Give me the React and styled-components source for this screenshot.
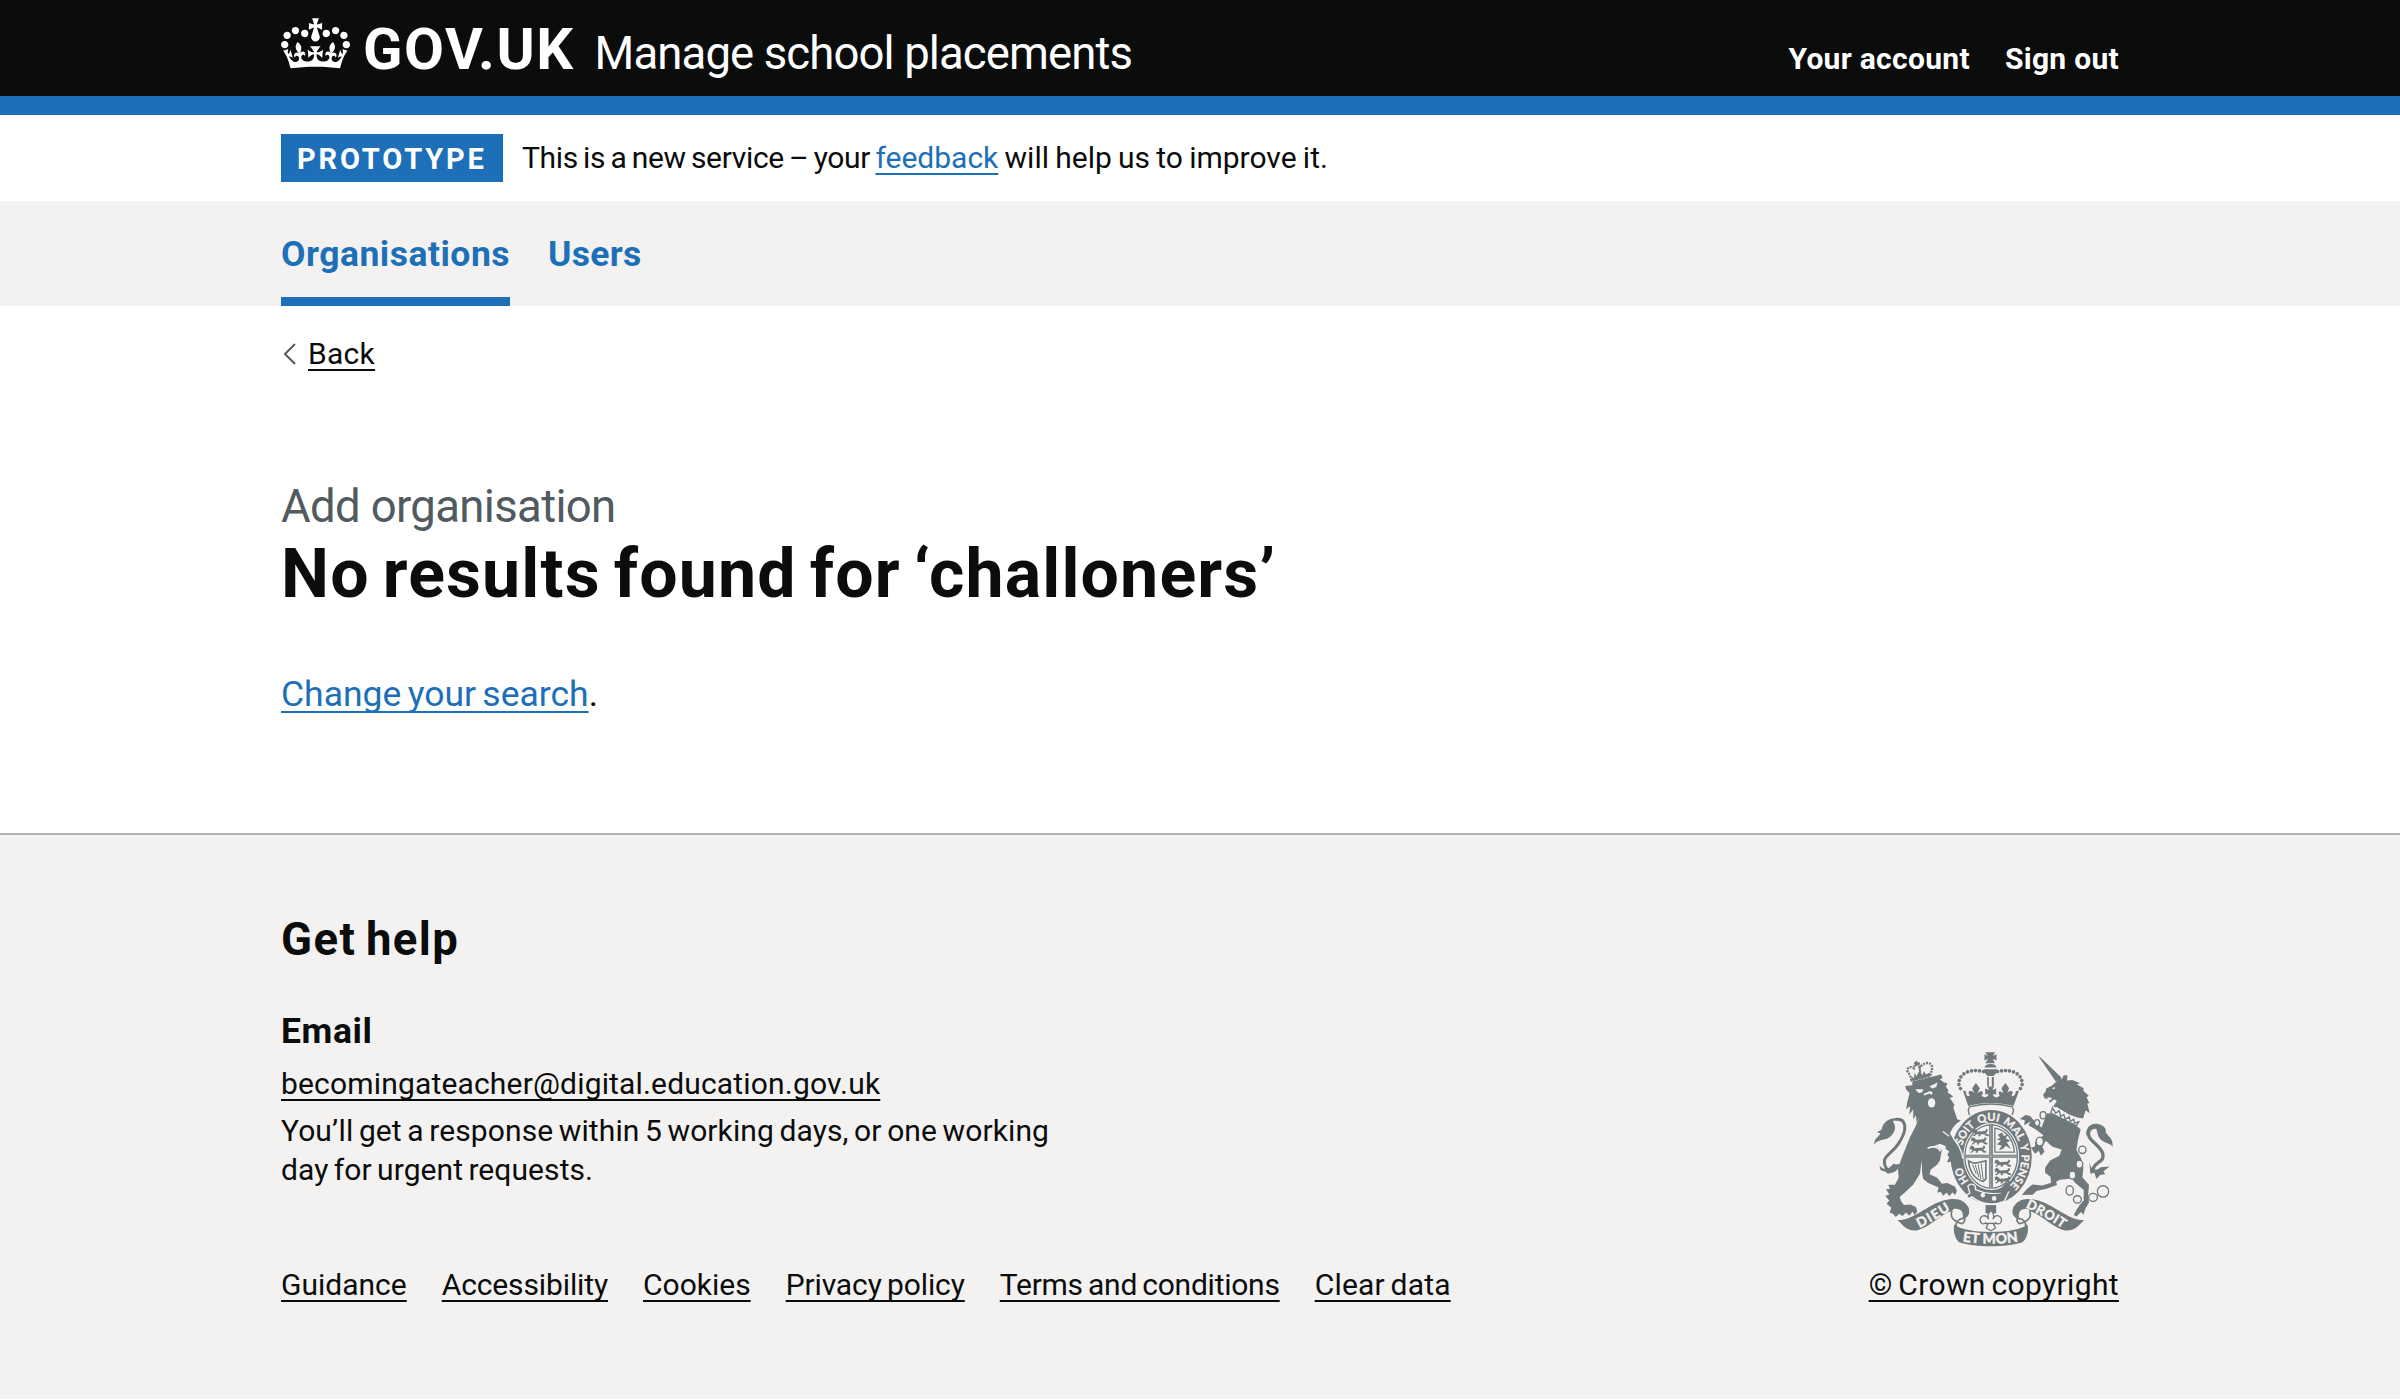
import React from "react";
import styled, { createGlobalStyle } from "styled-components";

const ink = "#0b0c0c";
const blue = "#1d70b8";
const grey = "#f3f2f1";

const GlobalStyle = createGlobalStyle`
  * { box-sizing: border-box; }
  body {
    margin: 0;
    background: #fff;
    color: ${ink};
    font-family: Roboto, "Liberation Sans", sans-serif;
    font-size: 30px;
    line-height: 38px;
  }
  h1, h2, h3, p, ul { margin: 0; padding: 0; }
  ul { list-style: none; }
`;

const Container = styled.div`
  width: 1838px;
  margin: 0 auto;
`;

const Header = styled.header`
  height: 115px;
  background: ${ink};
  border-bottom: 19px solid ${blue};
  color: #fff;
`;

const HeaderRow = styled(Container)`
  display: flex;
  align-items: baseline;
  padding-top: 18px;
  white-space: nowrap;
`;

const Crown = styled.svg`
  width: 69px;
  height: 51px;
  margin: 0 13px -4px 0;
  flex: none;
`;

const LogoText = styled.span`
  font-size: 58px;
  font-weight: 700;
  line-height: 60px;
  letter-spacing: 1.5px;
`;

const ServiceName = styled.span`
  margin-left: 20px;
  font-size: 45.5px;
  line-height: 50px;
  letter-spacing: -0.88px;
`;

const AccountNav = styled.nav`
  display: flex;
  gap: 35px;
  margin-left: auto;
`;

const AccountLink = styled.a`
  font-weight: 700;
  letter-spacing: 0.3px;
`;

const PhaseBanner = styled(Container)`
  display: flex;
  align-items: center;
  height: 86px;
  white-space: nowrap;
`;

const Tag = styled.strong`
  width: 222px;
  height: 48px;
  margin-right: 19px;
  padding-left: 16px;
  background: ${blue};
  color: #fff;
  font-size: 29px;
  line-height: 50px;
  letter-spacing: 2.85px;
`;

const Tracked = styled.span`
  letter-spacing: ${(p) => p.$track || 0}px;
  word-spacing: ${(p) => p.$word || 0}px;
`;

const Link = styled.a`
  color: ${(p) => (p.$blue ? blue : ink)};
  letter-spacing: ${(p) => p.$track || 0}px;
  word-spacing: ${(p) => p.$word || 0}px;
  text-decoration: underline;
  text-decoration-thickness: 2px;
  text-decoration-skip-ink: none;
  text-underline-offset: 5px;
`;

const PrimaryNav = styled.nav`
  background: ${grey};
`;

const NavRow = styled(Container)`
  display: flex;
  gap: 38px;
`;

const NavItem = styled.a`
  height: 105px;
  color: ${blue};
  font-size: 35.5px;
  font-weight: 700;
  line-height: 106px;
  letter-spacing: ${(p) => p.$track || 0}px;
  box-shadow: ${(p) => (p.$current ? `inset 0 -9px 0 ${blue}` : "none")};
`;

const Main = styled(Container).attrs({ as: "main" })`
  height: 527px;
  padding-top: 29px;
`;

const BackRow = styled.div`
  display: flex;
  align-items: center;
`;

const Chevron = styled.svg`
  width: 15px;
  height: 22px;
  margin-right: 12px;
`;

const Caption = styled.span`
  display: block;
  margin-top: 105px;
  color: #505a5f;
  font-size: 45.5px;
  line-height: 57px;
  letter-spacing: -0.65px;
`;

const Title = styled.h1`
  font-size: 68px;
  line-height: 78px;
  letter-spacing: 1.15px;
  word-spacing: -5px;
`;

const Action = styled.p`
  margin-top: 57px;
  font-size: 35.5px;
  line-height: 48px;
`;

const Footer = styled.footer`
  height: 566px;
  background: ${grey};
  border-top: 2px solid #b1b4b6;
`;

const FooterRow = styled(Container)`
  display: flex;
  align-items: flex-end;
  justify-content: space-between;
  padding-top: 77px;
`;

const HelpTitle = styled.h2`
  font-size: 45.5px;
  line-height: 56px;
  letter-spacing: 1.4px;
  word-spacing: -3px;
`;

const HelpSubtitle = styled.h3`
  margin: 39px 0 10px;
  font-size: 35.5px;
  line-height: 48px;
  letter-spacing: 0.6px;
`;

const HelpText = styled.p`
  margin: 9px 0 77px;
  line-height: 38.5px;
  white-space: nowrap;
`;

const FooterLinks = styled.ul`
  display: flex;
  gap: 35px;
  white-space: nowrap;
`;

const Copyright = styled.div`
  display: flex;
  flex-direction: column;
  align-items: center;
  gap: 19px;
  white-space: nowrap;
`;

const Arms = styled.svg`
  width: 239px;
  height: 196px;
`;

const footerLinks = [
  { label: "Guidance" },
  { label: "Accessibility", track: -0.12 },
  { label: "Cookies" },
  { label: "Privacy policy", track: -0.12, word: -2 },
  { label: "Terms and conditions", track: -0.25, word: -2 },
  { label: "Clear data", track: 0.2, word: -2 },
];

function CrownLogo() {
  return (
    <Crown viewBox="0 0 132 97" aria-hidden="true">
      <path
        fill="currentColor"
        fillRule="evenodd"
        d="M25 30.2c3.5 1.5 7.7-.2 9.1-3.7 1.5-3.6-.2-7.8-3.9-9.2-3.6-1.4-7.6.3-9.1 3.9-1.4 3.5.3 7.5 3.9 9zM9 39.5c3.6 1.5 7.8-.2 9.2-3.7 1.5-3.6-.2-7.8-3.9-9.1-3.6-1.5-7.6.2-9.1 3.8-1.4 3.5.3 7.5 3.8 9zM4.4 57.2c3.5 1.5 7.7-.2 9.1-3.8 1.5-3.6-.2-7.7-3.9-9.1-3.5-1.5-7.6.3-9.1 3.8-1.4 3.5.3 7.6 3.9 9.1zm38.3-21.4c3.5 1.5 7.7-.2 9.1-3.8 1.5-3.6-.2-7.7-3.9-9.1-3.6-1.5-7.6.3-9.1 3.8-1.3 3.6.4 7.7 3.9 9.1zm64.4-5.6c-3.6 1.5-7.8-.2-9.1-3.7-1.5-3.6.2-7.8 3.8-9.2 3.6-1.4 7.7.3 9.2 3.9 1.3 3.5-.4 7.5-3.9 9zm15.9 9.3c-3.6 1.5-7.7-.2-9.1-3.7-1.5-3.6.2-7.8 3.7-9.1 3.6-1.5 7.7.2 9.2 3.8 1.5 3.5-.3 7.5-3.8 9zm4.7 17.7c-3.6 1.5-7.8-.2-9.2-3.8-1.5-3.6.2-7.7 3.9-9.1 3.6-1.5 7.7.3 9.2 3.8 1.3 3.5-.4 7.6-3.9 9.1zM89.3 35.8c-3.6 1.5-7.8-.2-9.2-3.8-1.4-3.6.2-7.7 3.9-9.1 3.6-1.5 7.7.3 9.2 3.8 1.4 3.6-.3 7.7-3.9 9.1zM69.7 17.7l8.9 4.7V9.3l-8.9 2.8c-.2-.3-.5-.6-.9-.9L72.4 0H59.6l3.5 11.2c-.3.3-.6.5-.9.9l-8.8-2.8v13.1l8.8-4.7c.3.3.6.7.9.9l-5 15.4v.1c-.2.8-.4 1.6-.4 2.4 0 4.1 3.1 7.5 7 8.1h.2c.3 0 .7.1 1 .1.4 0 .7 0 1-.1h.2c4-.6 7.1-4.1 7.1-8.1 0-.8-.1-1.7-.4-2.4V34l-5.1-15.4c.4-.2.7-.6 1-.9zM66 92.8c16.9 0 32.8 1.1 47.1 3.2 4-16.9 8.9-26.7 14-33.5l-9.6-3.4c1 4.9 1.1 7.2 0 10.2-1.5-1.4-3-4.3-4.2-8.7L108.6 76c2.8-2 5-3.2 7.5-3.3-4.4 9.4-10 11.9-13.6 11.2-4.3-.8-6.3-4.6-5.6-7.9 1-4.7 5.7-5.9 8-.5 4.3-8.7-3-11.4-7.6-8.8 7.1-7.2 7.9-13.5 2.1-21.1-8 6.1-8.1 12.3-4.5 20.8-4.7-5.4-12.1-2.5-9.5 6.2 3.4-5.2 7.9-2 7.2 3.1-.6 4.3-6.4 7.8-13.5 7.2-10.3-.9-10.9-8-11.2-13.8 2.5-.5 7.1 1.8 11 7.3L80.2 60c-4.1 4.4-8 5.3-12.3 5.4 1.4-4.4 8-11.6 8-11.6H55.5s6.4 7.2 7.9 11.6c-4.2-.1-8-1-12.3-5.4l1.4 16.4c3.9-5.5 8.5-7.7 10.9-7.3-.3 5.8-.9 12.8-11.1 13.8-7.2.6-12.9-2.9-13.5-7.2-.7-5 3.8-8.3 7.1-3.1 2.7-8.7-4.6-11.6-9.4-6.2 3.7-8.5 3.6-14.7-4.6-20.8-5.8 7.6-5 13.9 2.2 21.1-4.7-2.6-11.9.1-7.7 8.8 2.3-5.5 7.1-4.2 8.1.5.7 3.3-1.3 7.1-5.7 7.9-3.5.7-9-1.8-13.5-11.2 2.5.1 4.7 1.3 7.5 3.3l-4.7-15.4c-1.2 4.4-2.7 7.2-4.3 8.7-1.1-3-.9-5.3 0-10.2l-9.5 3.4c5 6.9 9.9 16.7 14 33.5 14.8-2.1 30.8-3.2 47.7-3.2z"
      />
    </Crown>
  );
}

const steel = "#6f787b";

// Passant lion used in the first and fourth quarters of the shield.
function Passant({ x, y }) {
  return (
    <path
      transform={`translate(${x} ${y})`}
      d="M2 6 L8 1 L14 4 L18 9 L34 8 C42 8 46 4 42 0 L49 4 C50 10 44 13 42 14 L52 19 L52 23 L43 22 L38 17 L28 17 L26 23 L20 23 L22 18 L15 17 L9 23 L3 22 L10 17 L9 12 L1 14 L4 10Z"
    />
  );
}

const motto = [
  ["HO", 78, 48],
  ["SOIT", 190, 72],
  ["QUI", 274, 62],
  ["MAL", 348, 74],
  ["Y", 433, 20],
  ["PENSE", 462, 102],
];

const pearls = [
  [371, 93], [359, 91], [347, 90], [335, 91], [323, 94],
  [312, 100], [303, 109], [298, 120], [297, 132], [302, 144],
];

function RoyalArms() {
  return (
    <Arms viewBox="42 32 718 587" fill={steel} aria-hidden="true">
      {/* crown */}
      <path d="M376 35 L406 35 L399 46 L410 41 V60 L399 54 L405 68 H377 L385 54 L374 60 V41 L385 46Z M374 81 C376 72 385 70 392 70 C399 70 409 72 410 81Z M372 86 H412 V94 L401 106 H383 L372 94Z M382 109 h5 v29 h-5z M396 109 h6 v29 h-6z" />
      {pearls.map(([x, y]) => (
        <g key={x}>
          <circle cx={x} cy={y} r="5.5" />
          <circle cx={784 - x} cy={y} r="5.5" />
        </g>
      ))}
      <path d="M309 150 L318 152 C319 167 325 170 330 164 C320 151 332 146 343 157 L337 143 L348 127 L360 143 L353 158 C365 146 374 153 365 165 C373 174 384 170 386 160 L376 162 V144 L388 148 L383 138 H403 L397 148 L409 144 V162 L399 160 C401 171 412 174 420 165 C412 154 419 147 431 158 L425 143 L437 127 L448 143 L442 157 C451 147 465 150 455 164 C460 170 467 165 468 152 L478 150 L461 196 C416 184 369 184 325 196Z" />
      <path d="M329 199 C370 188 416 188 457 199 C466 210 459 220 453 227 C416 207 369 207 332 227 C324 217 323 208 329 199Z" fill={grey} stroke={steel} strokeWidth="4" />

      {/* garter and shield */}
      <ellipse cx="394" cy="349" rx="126" ry="146" fill={grey} />
      <ellipse cx="394" cy="349" rx="122" ry="141" />
      <ellipse cx="394" cy="348" rx="84" ry="101" fill={grey} />
      <ellipse cx="394" cy="348" rx="79" ry="95" fill="none" stroke={steel} strokeWidth="4" />
      <path d="M388 250 H399 V441 H388Z M315 343 H474 V352 H315Z" />
      <path d="M393 250 V441 M315 347 H474" stroke={grey} strokeWidth="1.5" />
      <Passant x="335" y="264" />
      <Passant x="331" y="289" />
      <Passant x="327" y="314" />
      <Passant x="402" y="356" />
      <Passant x="402" y="381" />
      <Passant x="402" y="406" />
      <path d="M405 263 C439 269 459 292 464 335 H405Z" fill="none" stroke={steel} strokeWidth="4" />
      <path d="M414 283 L427 276 L432 287 L445 280 L438 294 L452 300 L441 306 L454 326 L438 316 L430 325 L417 329 L426 315 L411 312 L424 300 L411 298 L421 292Z" />
      <g fill="none" stroke={steel} strokeWidth="3">
        <path d="M326 361 C344 374 356 365 378 361 V415 L370 423 C344 417 328 391 326 361Z" strokeWidth="5" />
        <path d="M338 372 L349 400 M346 373 L357 410 M355 372 L363 416 M364 369 L370 418" />
      </g>
      <path id="garter-path" d="M394 457 A91 108 0 0 1 394 241 A91 108 0 0 1 394 457" fill="none" />
      <path d="M324 437 C334 424 351 435 346 447 C379 463 410 463 446 455 L434 482 C406 495 365 494 337 469 C319 482 316 462 330 458 Z" stroke={grey} strokeWidth="4" />
      <path d="M411 452 C428 443 433 432 441 424 L452 440 L440 462Z" />
      <path d="M430 478 C405 492 365 490 340 467 L352 452 C380 465 412 465 445 452Z" />
      <circle cx="369" cy="464" r="7" fill={grey} />
      <circle cx="403" cy="474" r="7" fill={grey} />
      <g fill={grey} stroke={grey} strokeWidth="1" fontFamily="Lato, sans-serif" fontSize="33" fontWeight="700">
        {motto.map(([word, start, length]) => (
          <text key={word}>
            <textPath href="#garter-path" startOffset={start} textLength={length} lengthAdjust="spacingAndGlyphs">
              {word}
            </textPath>
          </text>
        ))}
      </g>

      {/* lion */}
      <path d="M157 123 L244 102 L248 112 L240 116 L252 126 L263 128 L258 138 L266 150 L262 154 L280 168 L270 172 L284 193 L280 200 L292 236 L303 240 L289 250 L279 262 L270 278 L281 297 L294 316 L302 335 L307 350 L303 372 L294 362 L286 368 L277 374 L273 364 L261 365 L268 350 L262 343 L268 333 L257 325 L258 317 L240 310 L218 318 L206 322 L232 318 L246 330 L243 343 L240 360 L232 372 L212 388 L209 401 L232 412 L246 430 L262 428 L285 438 L291 451 L286 464 L278 456 L268 467 L260 457 L249 466 L243 455 L232 456 L236 441 L205 428 L190 416 L187 402 L185 360 L180 400 L160 432 L133 458 L119 470 L123 482 L132 494 L152 492 L168 500 L172 514 L164 524 L158 514 L148 526 L138 516 L128 527 L118 520 L107 530 L99 520 L89 516 L94 502 L80 490 L88 480 L76 467 L88 462 L78 446 L90 446 L85 433 L105 433 L116 412 L114 384 L126 350 L150 290 L165 262 L172 245 L180 228 L170 247 L168 224 L160 236 L160 207 L148 222 L151 196 L139 206 L141 188 L149 158 L138 146 L136 136 L157 134Z" />
      <path d="M166 146 L191 146 L186 156 L176 157Z M209 137 L233 126 L229 139 L217 144Z M190 160 L210 151 L218 155 L216 163 L208 159 L194 165Z" fill={grey} />
      <ellipse cx="215" cy="187" rx="11" ry="14" fill={grey} />
      <path d="M203 323 C222 316 236 321 242 333" fill="none" stroke={grey} strokeWidth="5" />
      <path d="M249 273 L268 287 M280 292 L297 317 L305 336 L309 354" fill="none" stroke={grey} strokeWidth="4" />
      <path d="M155 119 L150 104 L142 91 C141 80 153 76 162 83 L166 69 L174 68 L180 80 C190 68 206 62 214 73 C220 82 214 92 211 106 Z" fill="none" stroke={steel} strokeWidth="7" strokeDasharray="6 3" />
      <path d="M154 108 L162 112 L164 97 L170 107 L178 91 L188 104 L192 91 L198 102 L210 96 L211 107 L157 121Z M165 65 L169 59 L172 66 L180 66 L179 73 L168 76 L163 70Z M175 78 L181 79 L184 96 L178 96Z" />
      <path d="M84 392 C54 347 92 346 115 310 C145 266 139 234 108 236" fill="none" stroke={steel} strokeWidth="9" />
      <path d="M137 242 C124 229 100 230 84 239 C72 245 66 258 65 268 L50 275 L61 278 C57 290 43 291 42 313 C54 293 74 303 92 287 C107 274 110 256 98 242 C112 239 126 236 137 242Z M58 374 C70 391 86 388 101 369 C108 375 115 370 125 369 C110 379 119 388 101 395 L84 400 L75 393 L62 389Z" />

      {/* unicorn */}
      <path d="M536 47 L543 51 L605 111 L588 123Z M590 123 L603 109 L606 117 L612 104 L623 104 L622 120 L638 118 L661 128 L651 131 L672 143 L671 151 L687 165 L681 171 L689 188 L683 189 L690 218 L678 209 L670 234 L653 231 L628 222 L592 200 L580 199 L591 181 L583 176 L570 187 L568 180 L573 177 L554 173 L550 162 L557 154 L560 143 L575 136Z" />
      <path d="M576 143 L586 139 L584 146Z M561 171 L573 171 L577 175 L570 178Z" fill={grey} />
      <path d="M562 218 L572 219 L650 256 L663 266 L655 298 L650 328 L664 353 L671 381 L668 410 L688 434 L685 466 L688 486 L678 503 L671 523 L664 515 L650 528 L642 524 L650 509 L661 492 L672 480 L672 449 L645 426 L637 414 L600 418 L589 424 L592 434 L560 445 L530 452 L519 463 L486 464 L502 445 L518 432 L548 435 L574 427 L572 409 L556 397 L556 382 L571 360 L599 346 L606 327 L578 319 L558 301 L548 319 L554 333 L544 346 L537 331 L526 340 L514 322 L526 317 L526 306 L551 284 L528 267 L506 254 L513 243 L493 254 L495 239 L480 235 L497 223 L511 226 L525 244 L545 261Z" />
      <path d="M578 202 L573 218 L650 256 L657 244 L644 248 L642 236 L632 243 L628 229 L617 237 L612 222 L603 228 L598 210 L588 218Z" fill={grey} stroke={steel} strokeWidth="4" />
      <path d="M698 392 C705 357 736 371 729 338 C720 312 676 296 688 270 C695 252 716 259 731 267" fill="none" stroke={steel} strokeWidth="10" />
      <path d="M680 286 C677 264 691 248 710 250 C727 251 742 263 738 275 C746 289 760 291 759 318 C746 303 729 310 716 287 L710 265 C700 262 688 271 680 286Z M689 365 C693 386 707 395 723 380 L750 378 L731 392 L737 401 L722 403 L710 416 L704 397 L692 400Z" />
      <g fill={grey} stroke={steel} strokeWidth="4">
        <ellipse cx="550" cy="224" rx="9" ry="11" />
        <ellipse cx="532" cy="247" rx="8" ry="10" />
        <ellipse cx="540" cy="303" rx="11" ry="13" />
        <circle cx="668" cy="328" r="11" />
        <ellipse cx="659" cy="371" rx="10" ry="12" />
        <ellipse cx="638" cy="404" rx="10" ry="12" />
        <ellipse cx="630" cy="450" rx="11" ry="14" />
        <ellipse cx="653" cy="477" rx="12" ry="11" />
        <ellipse cx="700" cy="471" rx="13" ry="12" />
        <circle cx="730" cy="453" r="17" />
      </g>

      {/* pendant */}
      <path d="M377 494 H409 V519 H377Z" />
      <g fill={grey} stroke={steel} strokeWidth="4">
        <path d="M387 536 C378 519 359 526 361 541 C363 550 370 553 377 548 L384 551 L379 563 L393 571 L407 563 L401 551 L409 548 C417 553 424 549 425 541 C426 525 407 519 399 536 C407 524 398 516 393 509 C387 516 379 525 387 536Z" />
        <path d="M376 549 H410" />
      </g>

      {/* ribbons */}
      <path d="M113 539 C157 541 204 494 248 481 C274 473 296 474 307 482 L276 512 C242 521 205 565 170 570 C157 572 143 567 132 558Z" />
      <path d="M673 539 C629 541 582 494 538 481 C512 473 490 474 479 482 L510 512 C544 521 581 565 616 570 C629 572 643 567 654 558Z" />
      <path d="M307 484 C340 510 325 533 299 537 C287 544 286 558 290 574 M276 512 C268 536 288 544 306 550 C315 547 317 536 310 530 M479 484 C446 510 461 533 487 537 C499 544 500 558 496 574 M510 512 C518 536 498 544 480 550 C471 547 469 536 476 530" fill="none" stroke={steel} strokeWidth="5" />
      <path d="M300 478 L325 500 C330 515 322 528 308 532 C312 515 304 503 283 505Z M486 478 L461 500 C456 515 464 528 478 532 C474 515 482 503 503 505Z" />
      <path d="M283 552 C316 582 470 582 503 552 C508 574 500 596 488 606 C438 622 348 622 298 606 C286 596 279 574 283 552Z" />
      <g fill={grey} stroke={grey} strokeWidth="1.5" fontFamily="Lato, sans-serif" fontWeight="700">
        <path id="dieu-path" d="M179 563 Q228 538 282 501" fill="none" stroke="none" />
        <text fontSize="40">
          <textPath href="#dieu-path" textLength="108">DIEU</textPath>
        </text>
        <path id="droit-path" d="M497 501 Q555 528 608 564" fill="none" stroke="none" />
        <text fontSize="39">
          <textPath href="#droit-path" textLength="128">DROIT</textPath>
        </text>
        <path id="mon-path" d="M308 603 Q393 617 480 603" fill="none" stroke="none" />
        <text fontSize="42">
          <textPath href="#mon-path" textLength="168">ET MON</textPath>
        </text>
      </g>
    </Arms>
  );
}

export default function App() {
  return (
    <>
      <GlobalStyle />
      <Header>
        <HeaderRow>
          <CrownLogo />
          <LogoText>GOV.UK</LogoText>
          <ServiceName>Manage school placements</ServiceName>
          <AccountNav>
            <AccountLink>Your account</AccountLink>
            <AccountLink>Sign out</AccountLink>
          </AccountNav>
        </HeaderRow>
      </Header>
      <PhaseBanner>
        <Tag>PROTOTYPE</Tag>
        <span>
          <Tracked $track={-0.35} $word={-1.8}>This is a new service – your </Tracked>
          <Link $blue>feedback</Link>
          <Tracked $word={-1.2}> will help us to improve it.</Tracked>
        </span>
      </PhaseBanner>
      <PrimaryNav>
        <NavRow>
          <NavItem $current $track={0.5}>Organisations</NavItem>
          <NavItem $track={0.3}>Users</NavItem>
        </NavRow>
      </PrimaryNav>
      <Main>
        <BackRow>
          <Chevron viewBox="0 0 15 22" fill="none" stroke="#505a5f" strokeWidth="2">
            <path d="M14 1 L4 11 L14 21" />
          </Chevron>
          <Link $track={0.3}>Back</Link>
        </BackRow>
        <Caption>Add organisation</Caption>
        <Title>No results found for ‘challoners’</Title>
        <Action>
          <Link $blue $word={-2.5}>Change your search</Link>.
        </Action>
      </Main>
      <Footer>
        <FooterRow>
          <div>
            <HelpTitle>Get help</HelpTitle>
            <HelpSubtitle>Email</HelpSubtitle>
            <Link $track={0.17}>becomingateacher@digital.education.gov.uk</Link>
            <HelpText>
              <Tracked $track={0.1} $word={-2}>
                You’ll get a response within 5 working days, or one working
              </Tracked>
              <br />
              <Tracked $track={0.08} $word={-2.2}>day for urgent requests.</Tracked>
            </HelpText>
            <FooterLinks>
              {footerLinks.map(({ label, track, word }) => (
                <li key={label}>
                  <Link $track={track} $word={word}>{label}</Link>
                </li>
              ))}
            </FooterLinks>
          </div>
          <Copyright>
            <RoyalArms />
            <Link $track={0.35} $word={-2}>© Crown copyright</Link>
          </Copyright>
        </FooterRow>
      </Footer>
    </>
  );
}
